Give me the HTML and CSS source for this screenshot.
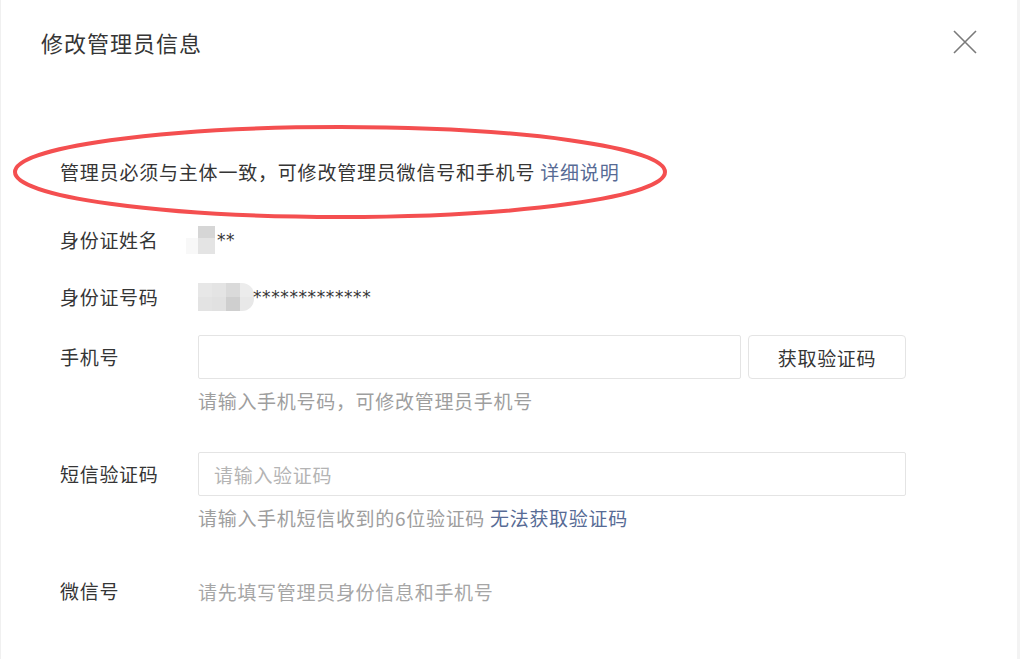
FILE: index.html
```html
<!DOCTYPE html>
<html lang="zh-CN">
<head>
    <meta charset="UTF-8">
    <meta name="viewport" content="width=device-width, initial-scale=1.0">
    <title>修改管理员信息</title>
    <link rel="stylesheet" href="styles.css">
</head>
<body>

    <div class="dialog">
        <!-- 标题 -->
        <div class="dialog-header">
            <h3 class="dialog-title">修改管理员信息</h3>
            <span class="dialog-close">
                <svg width="24" height="24" viewBox="0 0 24 24">
                    <path d="M1 1 L23 23 M23 1 L1 23" stroke="#7a7a7a" stroke-width="1.6" fill="none"/>
                </svg>
            </span>
        </div>

        <!-- 提示 -->
        <div class="notice">
            管理员必须与主体一致，可修改管理员微信号和手机号 <a class="link" href="#">详细说明</a>
        </div>
        <svg class="mark" width="670" height="100" viewBox="0 0 670 100">
            <ellipse cx="336" cy="48" rx="325" ry="45" stroke="#f44f50" stroke-width="4" fill="none"/>
        </svg>

        <div class="form">
            <div class="row row-text row-first">
                <label class="label">身份证姓名</label>
                <div class="value">
                    <span class="mosaic mosaic-name">
                        <i class="c1"></i><i class="c2"></i>
                        <i class="c3"></i><i class="c4"></i>
                    </span><span class="stars">**</span>
                </div>
            </div>

            <div class="row row-text">
                <label class="label">身份证号码</label>
                <div class="value">
                    <span class="mosaic mosaic-id">
                        <i class="m1"></i><i class="m2"></i><i class="m3"></i><i class="m4 end"></i>
                        <i class="m5"></i><i class="m6"></i><i class="m7"></i><i class="m8 end"></i>
                    </span><span class="stars">*************</span>
                </div>
            </div>

            <div class="row row-input">
                <label class="label">手机号</label>
                <div class="value">
                    <div class="input-group">
                        <input type="text" class="input input-phone">
                        <button class="btn">获取验证码</button>
                    </div>
                    <p class="hint">请输入手机号码，可修改管理员手机号</p>
                </div>
            </div>

            <div class="row row-input row-code">
                <label class="label">短信验证码</label>
                <div class="value">
                    <input type="text" class="input input-code" placeholder="请输入验证码">
                    <p class="hint">请输入手机短信收到的6位验证码 <a class="link" href="#">无法获取验证码</a></p>
                </div>
            </div>

            <div class="row row-text row-wechat">
                <label class="label">微信号</label>
                <div class="value hint-inline">请先填写管理员身份信息和手机号</div>
            </div>
        </div>
    </div>

</body>
</html>
```

FILE: styles.css
```css
body {
    margin: 0;
    padding: 0;
    background-color: #ffffff;
    font-family: "Noto Sans CJK SC", "Noto Sans", sans-serif;
    color: #353535;
}
.dialog {
    position: relative;
    height: 659px;
    box-sizing: border-box;
    border-left: 1px solid #f0f0f0;
    border-right: 3px solid #f3f3f3;
    background-color: #ffffff;
}
/* 标题 */
.dialog-header {
    display: flex;
    justify-content: space-between;
    align-items: center;
    padding: 28px 40px 0 40px;
}
.dialog-title {
    margin: 0;
    font-size: 22px;
    font-weight: normal;
    letter-spacing: 1px;
    line-height: 28px;
}
.dialog-close {
    display: flex;
    width: 24px;
    height: 24px;
    cursor: pointer;
}
/* 提示 */
.notice {
    margin-top: 102px;
    padding-left: 59px;
    font-size: 19px;
    letter-spacing: 0.8px;
    line-height: 28px;
}
.link {
    color: #576b95;
    text-decoration: none;
}
.mark {
    position: absolute;
    left: 3px;
    top: 124px;
}
/* 表单 */
.form {
    padding-left: 59px;
    padding-right: 115px;
}
.row {
    display: flex;
    font-size: 19px;
    letter-spacing: 0.7px;
}
.label {
    width: 138px;
    flex-shrink: 0;
    line-height: 28px;
}
.value {
    flex-grow: 1;
    display: flex;
    flex-direction: column;
}
.row-text .value {
    flex-direction: row;
    align-items: center;
    height: 28px;
}
.row-text {
    margin-top: 29px;
}
.row-first {
    margin-top: 40px;
}
.row-input {
    margin-top: 24px;
}
.row-input .label {
    line-height: 44px;
}
.row-code {
    margin-top: 37px;
}
.row-wechat {
    margin-top: 45px;
}
/* 打码 */
.mosaic {
    display: inline-grid;
    height: 28px;
}
.mosaic i {
    display: block;
}
.mosaic-name {
    grid-template-columns: 12px 17px;
    grid-template-rows: 12px 16px;
    margin-left: -12px;
}
.mosaic-name .c1 { background-color: #ffffff; }
.mosaic-name .c2 { background-color: #d6d6d6; }
.mosaic-name .c3 { background-color: #f8f8f8; }
.mosaic-name .c4 { background-color: #e4e4e4; }
.mosaic-id {
    grid-template-columns: 14px 14px 14px 14px;
    grid-template-rows: 14px 14px;
}
.mosaic-id .m1 { background-color: #e7e7e7; }
.mosaic-id .m2 { background-color: #e4e4e4; }
.mosaic-id .m3 { background-color: #dadada; }
.mosaic-id .m4 { background-color: #ececec; border-top-right-radius: 12px; }
.mosaic-id .m5 { background-color: #e3e3e3; }
.mosaic-id .m6 { background-color: #e1e1e1; }
.mosaic-id .m7 { background-color: #cfcfcf; }
.mosaic-id .m8 { background-color: #e8e8e8; border-bottom-right-radius: 12px; }
.stars {
    font-family: "DejaVu Sans", sans-serif;
    font-size: 17px;
    letter-spacing: 0.6px;
    color: #353535;
    margin-left: 2px;
}
.mosaic-id + .stars {
    margin-left: -1px;
}
/* 输入框 */
.input-group {
    display: flex;
    gap: 7px;
}
.input {
    height: 44px;
    box-sizing: border-box;
    border: 1px solid #e4e4e4;
    border-radius: 2px;
    padding: 0 15px;
    font-family: inherit;
    font-size: 19px;
    letter-spacing: 0.7px;
    color: #353535;
    outline: none;
}
.input::placeholder {
    color: #b4b4b4;
}
.input-phone {
    width: 543px;
}
.input-code {
    width: 708px;
}
.btn {
    width: 158px;
    height: 44px;
    border: 1px solid #e4e4e4;
    border-radius: 4px;
    background-color: #ffffff;
    font-family: inherit;
    font-size: 19px;
    letter-spacing: 0.7px;
    color: #353535;
    cursor: pointer;
}
.hint {
    margin: 8px 0 0;
    line-height: 28px;
    color: #9e9e9e;
}
.hint-inline {
    color: #a6a6a6;
}
```
